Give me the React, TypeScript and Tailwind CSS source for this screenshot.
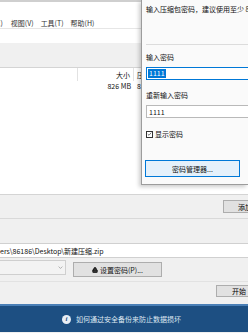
import { Lock } from 'lucide-react';

const font = "font-['Noto_Sans_CJK_SC','Noto_Sans',sans-serif]";

function MenuBar() {
  return (
    <div className="h-[26px] bg-white flex items-end text-[7px] leading-[10px] text-[#333] whitespace-nowrap">
      <span className="ml-[-20px]">编辑(E)</span>
      <span className="ml-[8px]">视图(V)</span>
      <span className="ml-[7px]">工具(T)</span>
      <span className="ml-[7px]">帮助(H)</span>
    </div>
  );
}

function FileList() {
  return (
    <div className="h-[127px] bg-white border-b border-[#d4d4d4] text-[7px] leading-[10px] text-[#111]">
      <div className="flex h-[13px] items-center">
        <div className="w-[78px] h-full border-r border-[#e2e2e2]" />
        <div className="w-[56px] h-full border-r border-[#e2e2e2] flex items-center justify-end pr-[3px]">
          大小
        </div>
        <div className="pl-[3px]">压缩后</div>
      </div>
      <div className="flex h-[10px]">
        <div className="w-[78px]" />
        <div className="w-[56px] text-right pr-[3px]">826 MB</div>
        <div className="pl-[3px]">8</div>
      </div>
    </div>
  );
}

function PasswordDialog() {
  return (
    <div className="absolute left-[141px] top-0 w-[107px] h-[185px] bg-[#fafafa] border-l border-b border-[#9c9c9c] shadow-[-2px_2px_4px_rgba(0,0,0,0.2)] overflow-hidden text-[7px] leading-[10px] text-[#111]">
      <div className="pl-[4px] pt-[4px] whitespace-nowrap">
        <p>输入压缩包密码，建议使用至少 8 位</p>
        <div className="mt-[30px] h-px bg-[#dcdcdc]" />
        <p className="mt-[7px]">输入密码</p>
        <div className="mt-[5px] h-[13px] w-[110px] bg-white border border-[#0078d7] flex items-center pl-px">
          <span className="bg-[#0078d7] text-white px-px leading-[9px]">1111</span>
        </div>
        <p className="mt-[10px]">重新输入密码</p>
        <div className="mt-[5px] h-[13px] w-[110px] bg-white border border-[#b9b9b9] flex items-center pl-[2px]">
          1111
        </div>
        <div className="mt-[11px] h-[10px] flex items-center gap-[2px]">
          <span className="w-[7px] h-[7px] border border-[#333] bg-white flex items-center justify-center">
            <svg viewBox="0 0 8 8" className="w-[6px] h-[6px]">
              <path d="M1.2 4.2 L3.2 6 L6.8 1.8" fill="none" stroke="#222" strokeWidth="1" />
            </svg>
          </span>
          <span>显示密码</span>
        </div>
        <button className="mt-[21px] ml-[-1px] h-[17px] w-[95px] bg-[#e5f1fb] border border-[#0078d7] flex items-center justify-center text-[7px] leading-[10px]">
          密码管理器...
        </button>
      </div>
    </div>
  );
}

export default function App() {
  return (
    <div className={`${font} relative w-[248px] h-[333px] overflow-hidden bg-[#f0f0f0]`}>
      <div className="h-[2px] bg-[#cfcfcf]" />
      <MenuBar />
      <div className="h-px bg-[#e6e6e6]" />
      <div className="h-[14px] bg-white" />
      <div className="h-[25px] bg-[#f0f0f0] border-b border-[#d4d4d4]" />
      <FileList />

      <div className="h-[23px] flex justify-end items-start">
        <button className="mt-[5px] mr-[-20px] h-[13px] w-[45px] shrink-0 bg-[#e1e1e1] border border-[#adadad] text-[7px] leading-[10px] text-left pl-[14px] whitespace-nowrap">
          添加
        </button>
      </div>
      <div className="h-px bg-[#d9d9d9]" />
      <div className="h-[24px]" />
      <div className="h-[15px] bg-white border-y border-[#d0d0d0] flex items-center text-[7px] leading-[10px] text-[#111] whitespace-nowrap">
        ers\86186\Desktop\新建压缩.zip
      </div>

      <div className="h-[24px] flex items-start border-b border-[#e2e2e2]">
        <div className="mt-[2px] h-[15px] w-[66px] bg-[#f3f3f3] border border-[#cfcfcf] border-l-0 flex items-center justify-end pr-[2px]">
          <svg viewBox="0 0 8 8" className="w-[5px] h-[5px]">
            <path d="M1 2.5 L4 5.5 L7 2.5" fill="none" stroke="#888" strokeWidth="1" />
          </svg>
        </div>
        <button className="ml-[7px] mt-[4px] h-[15px] w-[89px] bg-[#e1e1e1] border border-[#adadad] flex items-center justify-center gap-[2px] text-[7px] leading-[10px] text-[#111]">
          <Lock className="w-[6px] h-[6px]" strokeWidth={3} fill="#333" />
          设置密码(P)...
        </button>
      </div>

      <div className="h-[22px] flex justify-end items-start">
        <button className="mt-[3px] mr-[-10px] h-[12px] w-[42px] shrink-0 bg-[#e1e1e1] border border-[#adadad] text-[7px] leading-[10px] text-left pl-[15px] whitespace-nowrap">
          开始
        </button>
      </div>

      <div className="h-[28px] bg-[#1d4f82] border-t-2 border-[#4a7fb6] flex items-center pl-[62px] gap-[5px] text-[7px] leading-[10px] text-[#dfe8f2] whitespace-nowrap">
        <span className="w-[9px] h-[9px] rounded-full bg-[#e8eef5] flex items-center justify-center text-[#1d4f82] text-[7px] font-bold italic leading-none font-['Liberation_Serif',serif]">
          i
        </span>
        如何通过安全备份来防止数据损坏
      </div>

      <PasswordDialog />
    </div>
  );
}
